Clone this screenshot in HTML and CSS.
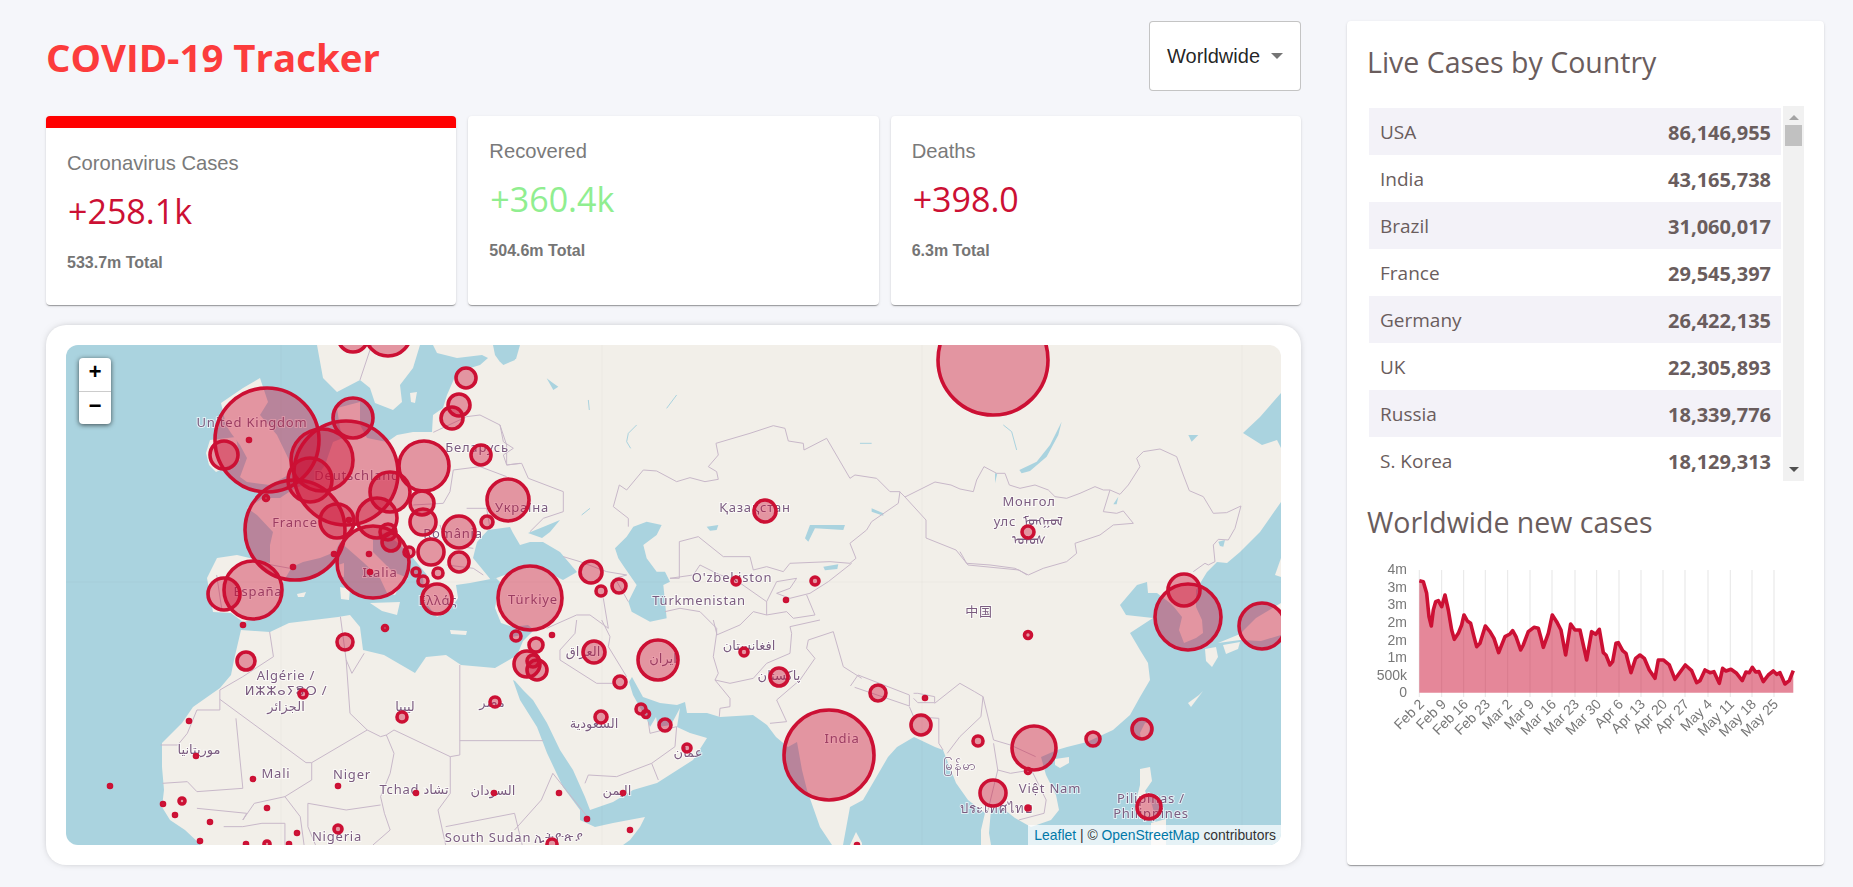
FILE: index.html
```html
<!DOCTYPE html>
<html lang="en">
<head>
    <meta charset="UTF-8">
    <title>COVID-19 Tracker</title>
    <link rel="stylesheet" href="styles.css">
</head>
<body>
<div class="app">
    <div class="app-left">
        <div class="app-header">
            <h1>COVID-19 Tracker</h1>
            <div class="country-select">
                <span>Worldwide</span>
                <i class="select-arrow"></i>
            </div>
        </div>

        <div class="app-stats">
            <div class="info-box info-box-selected">
                <p class="info-title">Coronavirus Cases</p>
                <p class="info-value">+258.1k</p>
                <p class="info-total">533.7m Total</p>
            </div>
            <div class="info-box">
                <p class="info-title">Recovered</p>
                <p class="info-value info-green">+360.4k</p>
                <p class="info-total">504.6m Total</p>
            </div>
            <div class="info-box">
                <p class="info-title">Deaths</p>
                <p class="info-value">+398.0</p>
                <p class="info-total">6.3m Total</p>
            </div>
        </div>

        <div class="map-card">
            <div class="map">
                <svg class="map-svg" viewBox="0 0 1215 500">
                    <g class="tiles">
                        <rect class="water" width="1215" height="500"/>
                        <!-- Eurasia and Africa in one outline -->
                        <path class="land" d="M367 0 L1215 0 L1215 48 L1194 72 L1177 88 L1196 100 L1211 95 L1215 103 L1215 157 L1194 187 L1174 207 L1161 218 L1151 217 L1141 227 L1130 245 L1130 262 L1136 275 L1137 288 L1130 293 L1118 298 L1113 285 L1116 272 L1108 262 L1104 258 L1091 248 L1082 248 L1081 237 L1071 240 L1054 260 L1060 270 L1087 273 L1064 288 L1074 305 L1082 318 L1084 335 L1074 352 L1064 370 L1047 385 L1021 397 L1001 402 L991 405 L975 412 L980 430 L990 450 L993 465 L985 475 L965 482 L949 473 L935 462 L925 464 L923 488 L925 500 L915 500 L915 485 L919 468 L902 455 L890 438 L877 405 L869 402 L848 392 L831 402 L822 412 L797 455 L784 462 L777 500 L766 500 L754 482 L741 445 L736 425 L731 397 L722 402 L710 392 L701 380 L687 370 L654 372 L641 368 L621 368 L619 357 L611 360 L594 358 L577 352 L566 332 L563 337 L567 350 L581 375 L584 382 L590 372 L592 382 L605 380 L614 363 L611 382 L624 388 L641 393 L627 415 L591 438 L567 445 L547 457 L524 465 L519 452 L507 425 L494 405 L481 378 L467 355 L457 345 L449 336 L447 335 L454 355 L471 382 L481 408 L497 442 L514 465 L514 475 L529 482 L547 478 L579 472 L574 482 L564 495 L557 500 L135 500 L119 485 L104 475 L96 462 L98 445 L96 422 L96 398 L116 378 L127 362 L154 343 L165 330 L168 315 L175 285 L204 287 L223 278 L272 272 L284 270 L294 282 L297 305 L318 310 L349 328 L360 312 L380 310 L395 320 L429 323 L448 312 L449 315 L457 296 L468 285 L462 280 L447 282 L435 278 L429 263 L434 237 L430 233 L404 238 L390 240 L392 253 L384 265 L371 272 L359 257 L357 233 L361 230 L347 213 L331 197 L317 188 L307 193 L307 207 L327 227 L342 233 L334 240 L329 250 L321 248 L314 233 L297 217 L281 203 L274 197 L269 207 L254 213 L237 217 L226 222 L217 237 L214 257 L197 272 L177 277 L165 268 L147 267 L141 233 L151 213 L171 210 L204 218 L204 200 L207 187 L191 170 L181 163 L197 153 L214 153 L229 143 L247 137 L259 120 L267 97 L277 93 L274 83 L271 63 L294 57 L294 80 L301 93 L321 97 L331 90 L347 87 L366 87 L367 70 L377 63 L381 50 L391 27 L414 20 L422 13 L416 10 L391 13 L371 8 Z"/>
                        <!-- islands -->
                        <path class="land" d="M251 0 L257 33 L271 47 L294 35 L304 43 L309 58 L327 65 L336 57 L334 40 L347 23 L354 0 Z"/>
                        <path class="land" d="M177 43 L194 33 L202 57 L194 70 L211 90 L224 117 L226 128 L204 140 L181 137 L174 132 L181 113 L174 100 L165 88 L160 80 L155 58 Z"/>
                        <path class="land" d="M144 95 L170 92 L174 115 L150 127 L143 120 L140 108 Z"/>
                        <path class="land" d="M274 242 L284 244 L283 255 L275 254 Z"/>
                        <path class="land" d="M272 220 L278 218 L278 232 L273 233 Z"/>
                        <path class="land" d="M304 258 L334 257 L331 270 L316 266 Z"/>
                        <path class="land" d="M384 285 L401 286 L400 290 L385 289 Z"/>
                        <path class="land" d="M231 249 L240 247 L238 252 L232 252 Z"/>
                        <path class="land" d="M344 48 L351 47 L349 58 L345 57 Z"/>
                        <path class="land" d="M446 292 L456 290 L453 296 L447 296 Z"/>
                        <path class="land" d="M784 500 L790 487 L796 498 L796 500 Z"/>
                        <path class="land" d="M989 414 L1003 412 L1003 418 L994 423 L989 420 Z"/>
                        <path class="land" d="M1139 304 L1150 302 L1152 312 L1146 322 L1140 316 Z"/>
                        <path class="land" d="M1157 300 L1174 297 L1172 304 L1160 309 Z"/>
                        <path class="land" d="M1152 298 L1174 289 L1190 273 L1215 258 L1215 290 L1195 296 L1174 295 Z"/>
                        <path class="land" d="M1209 230 L1215 213 L1215 232 Z"/>
                        <path class="land" d="M1079 378 L1085 377 L1082 391 L1075 394 L1074 388 Z"/>
                        <path class="land" d="M1074 424 L1084 422 L1086 436 L1079 446 L1086 460 L1090 474 L1072 470 L1071 452 L1074 440 Z"/>
                        <path class="land" d="M1085 478 L1100 474 L1100 500 L1085 500 Z"/>
                        <path class="land" d="M1125 362 L1122 358 L1133 350 L1137 346 Z"/>
                        <!-- inland water -->
                        <path class="water" d="M421 230 L407 213 L411 197 L422 185 L444 182 L447 188 L454 200 L464 197 L477 197 L494 207 L511 227 L497 235 L481 227 L464 222 L447 227 L425 235 Z"/>
                        <path class="water" d="M462 188 L477 182 L494 175 L484 187 L476 193 Z"/>
                        <g transform="translate(434 0) scale(.3333)">
                            <path class="water" d="M345 610 L380 575 L400 545 L440 530 L485 540 L470 570 L430 600 L440 640 L470 680 L495 680 L510 710 L490 720 L500 820 L450 830 L395 800 L385 770 L410 720 L375 670 L355 640 Z"/>
                            <path class="water" d="M915 580 L930 540 L1035 540 L1030 555 L945 550 L925 590 Z"/>
                            <path class="water" d="M970 665 L1015 658 L1012 672 L975 676 Z"/>
                            <path class="water" d="M620 545 L655 540 L650 555 L630 557 Z"/>
                            <path class="water" d="M1115 490 L1150 505 L1150 512 L1115 500 Z"/>
                            <path class="water" d="M0 10 L40 25 L45 45 L10 60 L0 50 Z"/>
                            <path class="water" d="M140 100 L160 115 L175 125 L160 135 Z"/>
                            <path class="river" d="M410 240 L385 265 L380 290 L392 310"/>
                            <path class="river" d="M530 150 L500 190"/>
                            <path class="river" d="M1115 295 L1080 295"/>
                            <path class="river" d="M270 490 L245 510"/>
                            <path class="river" d="M265 165 L268 195"/>
                        </g>
                        <g transform="translate(894 0) scale(.3333)">
                            <path class="water" d="M178 375 L230 350 L270 300 L305 230 L295 270 L260 335 L210 378 L185 385 Z"/>
                            <path class="water" d="M775 590 L795 585 L790 605 L780 603 Z"/>
                            <path class="water" d="M685 270 L715 270 L695 290 Z"/>
                            <path class="water" d="M460 478 L475 455 L470 478 Z"/>
                            <path class="water" d="M105 385 L112 385 L105 415 Z"/>
                            <path class="river" d="M130 240 L155 260 L170 315"/>
                        </g>
                        <path class="water" d="M427 0 L454 0 L450 14 L434 17 L429 10 Z"/>
                        <path class="seam" d="M215 0 V500 M536 0 V500 M856 0 V500 M1176 0 V500 M0 237 H1215"/>

                        <!-- borders, traced in the coordinates of the crops they came from -->
                        <g transform="translate(894 0) scale(.3333)">
                            <path class="border" d="M0 432 L40 440 L50 405 L72 365 L110 385 L135 385 L148 420 L180 430 L225 420 L265 435 L285 455 L320 460 L360 445 L405 425 L430 435 L450 435 L480 448 L505 420 L540 365 L530 340 L550 320 L600 312 L650 335 L670 390 L688 437 L730 455 L760 505 L800 503 L843 483 L825 550 L805 585 L775 583 L760 600 L765 650 L745 660 L735 655 L700 680"/>
                            <path class="border" d="M450 435 L430 500 L470 505 L490 498 L520 535 L460 540 L420 570 L345 595 L350 625 L320 650 L250 670 L205 690 L165 670 L90 660 L20 655 L0 620"/>
                        </g>
                        <path class="border" d="M834 147 L839 152 L869 137 L885 140 L894 144"/>
                        <path class="border" d="M839 152 L860 175 L860 193 L890 205 L902 220 L953 225 L961 230"/>
                        <g transform="translate(434 0) scale(.3333)">
                            <path class="border" d="M385 545 L385 520 L340 485 L358 420 L380 435 L430 375 L470 378 L530 410 L570 398 L615 410 L655 403 L650 380 L625 365 L655 330 L648 295 L750 265 L820 242 L855 250 L865 288 L910 295 L912 315 L980 280 L1050 400 L1065 390 L1130 400 L1170 440 L1200 440"/>
                            <path class="border" d="M1200 440 L1195 475 L1115 530 L1100 555 L1050 595 L1068 640 L1050 655 L990 650 L870 655 L850 680 L800 665 L760 675 L750 635 L670 635 L595 575 L538 590 L538 700 L510 700"/>
                            <path class="border" d="M510 700 L580 690 L600 660 L660 690 L700 700 L800 770 L830 710 L890 700 L870 730 L830 745 L870 760 L930 745 L985 710 L1055 655"/>
                            <path class="border" d="M495 800 L540 790 L600 800 L650 850 L650 870 L720 840 L760 800 L800 810 L800 770"/>
                            <path class="border" d="M800 810 L860 800 L880 820 L945 810 L920 750"/>
                            <path class="border" d="M0 240 L10 290 L40 310 L10 330 L20 360 L65 355 L85 400 L190 440 L190 500 L130 520 L90 560"/>
                            <path class="border" d="M190 635 L240 650 L320 680 L380 690 L345 700 L385 770"/>
                            <path class="border" d="M310 760 L325 850 L270 810 L230 810 L140 850"/>
                        </g>
                        <g transform="translate(434 275) scale(.3333)">
                            <path class="border" d="M640 0 L650 40 L640 110 L655 160 L645 180 L690 235 L690 260 L660 265 L658 290"/>
                            <path class="border" d="M645 180 L690 190 L760 175 L800 130 L870 100 L875 40 L870 20 L960 0"/>
                            <path class="border" d="M1000 35 L925 60 L920 85 L945 115 L900 180 L830 240 L860 305 L810 310"/>
                            <path class="border" d="M1000 35 L1030 140 L1085 175"/>
                            <path class="border" d="M230 0 L225 40 L180 90 L180 120 L290 190 L340 190"/>
                            <path class="border" d="M305 0 L330 50 L325 80 L380 170"/>
                            <path class="border" d="M255 490 L265 465 L350 470 L455 430 L475 480"/>
                            <path class="border" d="M455 430 L525 380 L530 320 L450 340 L445 305"/>
                        </g>
                        <g transform="translate(574 255) scale(.4209 .3333)">
                            <path class="border" d="M500 258 L518 225 L640 285 L640 318 L510 262"/>
                            <path class="border" d="M650 280 L660 280 L700 290 L700 308 L660 308 L650 295"/>
                            <path class="border" d="M640 320 L650 350 L710 355 L710 430 L720 450"/>
                            <path class="border" d="M700 310 L760 250 L795 275 L815 290 L810 350 L760 410 L730 460"/>
                            <path class="border" d="M815 290 L840 420 L880 435 L940 470"/>
                            <path class="border" d="M840 430 L850 510 L880 520 L930 510 L965 600 L960 640 L900 660"/>
                            <path class="border" d="M850 510 L825 640"/>
                        </g>
                        <g transform="translate(-26 255) scale(.3827 .3333)">
                            <path class="border" d="M600 95 L610 170 L530 230 L470 270 L470 330 L410 330 L385 400 L360 435 L315 435"/>
                            <path class="border" d="M470 298 L695 488 L710 488 L855 390 L890 410 L905 405 L925 390 L1072 470"/>
                            <path class="border" d="M785 50 L800 180 L815 220 L847 160"/>
                            <path class="border" d="M800 180 L810 340 L855 390"/>
                            <path class="border" d="M905 405 L925 460 L915 520 L890 590 L900 640 L915 690 L870 735"/>
                            <path class="border" d="M512 355 L530 565 L410 575 L385 545 L320 550"/>
                            <path class="border" d="M1097 195 L1097 465 L1072 470 L1072 580 L1040 630 L1060 735"/>
                            <path class="border" d="M1097 422 L1315 422"/>
                            <path class="border" d="M710 488 L710 540 L640 590 L680 650"/>
                            <path class="border" d="M700 610 L800 630 L890 615"/>
                            <path class="border" d="M1060 680 L1240 640 L1260 735"/>
                            <path class="border" d="M1240 690 L1310 600 L1340 520"/>
                            <path class="border" d="M1340 520 L1430 650"/>
                            <path class="border" d="M530 660 L560 610 L640 590"/>
                            <path class="border" d="M410 625 L540 640 L530 660"/>
                            <path class="border" d="M480 680 L530 680 L580 670 L640 670 L640 735"/>
                            <path class="border" d="M680 650 L690 735"/>
                            <path class="border" d="M700 610 L700 680 L720 735"/>
                        </g>
                        <g transform="translate(114 0) scale(.3333)">
                            <path class="border" d="M575 0 L540 105"/>
                            <path class="border" d="M760 262 L860 215 L900 210 L960 240 L980 300 L980 360 L1020 355"/>
                            <path class="border" d="M820 375 L900 365 L980 395"/>
                            <path class="border" d="M820 375 L810 440 L790 475 L700 480"/>
                            <path class="border" d="M860 490 L920 490 L930 550"/>
                            <path class="border" d="M780 540 L800 600 L880 610"/>
                            <path class="border" d="M800 660 L880 670 L910 690"/>
                            <path class="border" d="M220 650 L330 670"/>
                            <path class="border" d="M110 690 L125 790"/>
                        </g>

                        <!-- place names -->
                        <text class="place" x="186" y="82">United Kingdom</text>
                        <text class="place" x="291" y="135">Deutschland</text>
                        <text class="place" x="229" y="182">France</text>
                        <text class="place" x="192" y="251">España</text>
                        <text class="place" x="314" y="232">Italia</text>
                        <text class="place" x="411" y="107">Беларусь</text>
                        <text class="place" x="456" y="167">Україна</text>
                        <text class="place" x="387" y="193">România</text>
                        <text class="place" x="372" y="260">Ελλάς</text>
                        <text class="place" x="467" y="259">Türkiye</text>
                        <text class="place" x="689" y="167">Қазақстан</text>
                        <text class="place" x="666" y="237">O'zbekiston</text>
                        <text class="place" x="633" y="260">Türkmenistan</text>
                        <text class="place" x="963" y="161">Монгол</text>
                        <text class="place" x="939" y="181">улс</text>
                        <text class="place" x="977" y="181">ᠮᠣᠩᠭᠣᠯ</text>
                        <text class="place" x="963" y="200">ᠤᠯᠤᠰ</text>
                        <text class="place" x="913" y="271">中国</text>
                        <text class="place" x="517" y="311">العراق</text>
                        <text class="place" x="597" y="318">ایران</text>
                        <text class="place" x="683" y="305">افغانستان</text>
                        <text class="place" x="713" y="335">پاکستان</text>
                        <text class="place" x="528" y="383">السعودية</text>
                        <text class="place" x="622" y="412">عمان</text>
                        <text class="place" x="551" y="450">اليمن</text>
                        <text class="place" x="776" y="398">India</text>
                        <text class="place" x="339" y="366">ليبيا</text>
                        <text class="place" x="426" y="362">مصر</text>
                        <text class="place" x="220" y="335">Algérie /</text>
                        <text class="place" x="220" y="350">ⵍⵣⵣⴰⵢⴻⵔ /</text>
                        <text class="place" x="220" y="366">الجزائر</text>
                        <text class="place" x="133" y="409">موريتانيا</text>
                        <text class="place" x="210" y="433">Mali</text>
                        <text class="place" x="286" y="434">Niger</text>
                        <text class="place" x="348" y="449">Tchad تشاد</text>
                        <text class="place" x="427" y="450">السودان</text>
                        <text class="place" x="271" y="496">Nigeria</text>
                        <text class="place" x="422" y="497">South Sudan</text>
                        <text class="place" x="493" y="496">ኢትዮጵያ</text>
                        <text class="place" x="894" y="425">မြန်မာ</text>
                        <text class="place" x="931" y="468">ประเทศไทย</text>
                        <text class="place" x="984" y="448">Việt Nam</text>
                        <text class="place" x="1085" y="458">Pilipinas /</text>
                        <text class="place" x="1085" y="473">Philippines</text>
                    </g>

                    <!-- cases -->
                    <g class="cases">
                        <circle cx="201" cy="95" r="52"/><circle cx="158" cy="110" r="14"/><circle cx="229" cy="185" r="50"/>
                        <circle cx="187" cy="245" r="29"/><circle cx="158" cy="249" r="16"/><circle cx="280" cy="128" r="52"/>
                        <circle cx="256" cy="115" r="31"/><circle cx="244" cy="135" r="22"/><circle cx="287" cy="73" r="20"/>
                        <circle cx="358" cy="121" r="25"/><circle cx="324" cy="147" r="20"/><circle cx="311" cy="173" r="20"/>
                        <circle cx="271" cy="176" r="17"/><circle cx="307" cy="217" r="36"/><circle cx="356" cy="158" r="12"/>
                        <circle cx="357" cy="177" r="13"/><circle cx="393" cy="187" r="16"/><circle cx="365" cy="207" r="13"/>
                        <circle cx="393" cy="217" r="10"/><circle cx="322" cy="187" r="8"/><circle cx="325" cy="197" r="9"/>
                        <circle cx="343" cy="207" r="5"/><circle cx="350" cy="227" r="4"/><circle cx="357" cy="236" r="5"/>
                        <circle cx="372" cy="228" r="5"/><circle cx="371" cy="254" r="15"/><circle cx="421" cy="177" r="6"/>
                        <circle cx="442" cy="155" r="21"/><circle cx="415" cy="110" r="10"/><circle cx="386" cy="73" r="11"/>
                        <circle cx="393" cy="60" r="11"/><circle cx="400" cy="33" r="10"/><circle cx="287" cy="-8" r="15"/>
                        <circle cx="322" cy="-12" r="23"/><circle cx="183" cy="95" r="1.5"/><circle cx="200" cy="153" r="2.5"/>
                        <circle cx="227" cy="222" r="1.5"/><circle cx="268" cy="209" r="1.5"/><circle cx="283" cy="175" r="1.5"/>
                        <circle cx="303" cy="209" r="1.5"/><circle cx="304" cy="227" r="1.5"/><circle cx="177" cy="280" r="1.5"/>
                        <circle cx="319" cy="283" r="2.5"/><circle cx="279" cy="297" r="8"/><circle cx="464" cy="253" r="32"/>
                        <circle cx="525" cy="227" r="11"/><circle cx="535" cy="246" r="5"/><circle cx="553" cy="241" r="7"/>
                        <circle cx="699" cy="166" r="11"/><circle cx="670" cy="236" r="4"/><circle cx="749" cy="236" r="4"/>
                        <circle cx="720" cy="255" r="1.5"/><circle cx="450" cy="291" r="5"/><circle cx="486" cy="290" r="1.5"/>
                        <circle cx="470" cy="300" r="7"/><circle cx="461" cy="319" r="13"/><circle cx="471" cy="325" r="10"/>
                        <circle cx="467" cy="316" r="6"/><circle cx="528" cy="307" r="11"/><circle cx="592" cy="315" r="20"/>
                        <circle cx="554" cy="337" r="6"/><circle cx="535" cy="372" r="6"/><circle cx="575" cy="364" r="5"/>
                        <circle cx="580" cy="369" r="3.5"/><circle cx="599" cy="380" r="6"/><circle cx="621" cy="403" r="4"/>
                        <circle cx="678" cy="307" r="4"/><circle cx="713" cy="332" r="9"/><circle cx="763" cy="410" r="45"/>
                        <circle cx="812" cy="348" r="8"/><circle cx="557" cy="448" r="1.5"/><circle cx="493" cy="448" r="1.5"/>
                        <circle cx="521" cy="474" r="1.5"/><circle cx="564" cy="485" r="1.5"/><circle cx="486" cy="499" r="5"/>
                        <circle cx="855" cy="380" r="10"/><circle cx="859" cy="353" r="1.5"/><circle cx="912" cy="396" r="5"/>
                        <circle cx="927" cy="448" r="13"/><circle cx="968" cy="403" r="22"/><circle cx="962" cy="426" r="2.5"/>
                        <circle cx="962" cy="463" r="2"/><circle cx="1027" cy="394" r="7"/><circle cx="1076" cy="384" r="10"/>
                        <circle cx="1083" cy="462" r="12"/><circle cx="1122" cy="272" r="33"/><circle cx="1118" cy="245" r="16"/>
                        <circle cx="1196" cy="281" r="23"/><circle cx="962" cy="290" r="3.5"/><circle cx="962" cy="187" r="6"/>
                        <circle cx="927" cy="15" r="55"/><circle cx="180" cy="316" r="9"/><circle cx="237" cy="349" r="4"/>
                        <circle cx="336" cy="372" r="5"/><circle cx="429" cy="357" r="5"/><circle cx="123" cy="376" r="1.5"/>
                        <circle cx="130" cy="411" r="1.5"/><circle cx="44" cy="441" r="1.5"/><circle cx="187" cy="434" r="1.5"/>
                        <circle cx="272" cy="441" r="1.5"/><circle cx="350" cy="448" r="1.5"/><circle cx="428" cy="448" r="1.5"/>
                        <circle cx="97" cy="459" r="1.5"/><circle cx="116" cy="456" r="3"/><circle cx="109" cy="470" r="1.5"/>
                        <circle cx="144" cy="477" r="1.5"/><circle cx="201" cy="463" r="1.5"/><circle cx="134" cy="496" r="1.5"/>
                        <circle cx="231" cy="488" r="1.5"/><circle cx="272" cy="484" r="4"/><circle cx="201" cy="499" r="3"/>
                        <circle cx="180" cy="499" r="1.5"/><circle cx="223" cy="499" r="1.5"/><circle cx="791" cy="500" r="1.5"/>
                    </g>
                </svg>

                <div class="zoom-control">
                    <span class="zoom-btn">+</span>
                    <span class="zoom-btn">−</span>
                </div>
                <div class="attribution"><a>Leaflet</a> | © <a>OpenStreetMap</a> contributors</div>
            </div>
        </div>
    </div>

    <div class="app-right">
        <h3>Live Cases by Country</h3>
        <div class="table-box">
            <div class="table-rows">
                <div class="table-row"><span>USA</span><strong>86,146,955</strong></div>
                <div class="table-row"><span>India</span><strong>43,165,738</strong></div>
                <div class="table-row"><span>Brazil</span><strong>31,060,017</strong></div>
                <div class="table-row"><span>France</span><strong>29,545,397</strong></div>
                <div class="table-row"><span>Germany</span><strong>26,422,135</strong></div>
                <div class="table-row"><span>UK</span><strong>22,305,893</strong></div>
                <div class="table-row"><span>Russia</span><strong>18,339,776</strong></div>
                <div class="table-row"><span>S. Korea</span><strong>18,129,313</strong></div>
            </div>
            <div class="scrollbar">
                <i class="scroll-up"></i>
                <b class="scroll-thumb"></b>
                <i class="scroll-down"></i>
            </div>
        </div>

        <h3 class="chart-title">Worldwide new cases</h3>
        <svg class="chart" viewBox="0 0 435 195">
            <path class="chart-grid" d="M50.3 15V142 M72.7 15V142 M94.7 15V142 M116.3 15V142 M138.7 15V142 M161 15V142 M183 15V142 M206 15V142 M227.7 15V142 M250 15V142 M272 15V142 M294 15V142 M316 15V142 M339 15V142 M361.3 15V142 M383 15V142 M405 15V142"/>
            <g transform="translate(-39 -65) scale(.3333)">
                <path class="chart-area" d="M268 272 L280 275 L290 310 L297 380 L304 408 L310 360 L317 335 L325 332 L335 350 L345 315 L355 360 L365 420 L373 448 L385 430 L395 405 L402 375 L412 393 L422 400 L432 440 L440 470 L450 460 L466 408 L480 425 L492 445 L506 488 L525 440 L540 432 L548 422 L558 440 L572 480 L580 465 L595 425 L612 412 L625 415 L632 440 L640 472 L655 430 L667 375 L680 395 L693 420 L707 495 L722 402 L735 420 L750 420 L770 510 L785 425 L797 433 L808 418 L820 488 L828 495 L840 525 L848 515 L858 460 L865 458 L878 482 L888 490 L903 548 L917 505 L930 495 L943 505 L958 540 L975 565 L985 510 L1000 510 L1018 525 L1035 568 L1048 550 L1066 525 L1085 542 L1100 578 L1110 572 L1125 540 L1140 548 L1152 545 L1168 580 L1178 535 L1188 543 L1203 538 L1220 550 L1237 572 L1248 546 L1258 548 L1267 532 L1277 546 L1287 545 L1300 575 L1315 555 L1330 543 L1340 553 L1350 548 L1365 582 L1378 572 L1390 542 L1390 608 L268 608 Z"/>
                <path class="chart-line" d="M268 272 L280 275 L290 310 L297 380 L304 408 L310 360 L317 335 L325 332 L335 350 L345 315 L355 360 L365 420 L373 448 L385 430 L395 405 L402 375 L412 393 L422 400 L432 440 L440 470 L450 460 L466 408 L480 425 L492 445 L506 488 L525 440 L540 432 L548 422 L558 440 L572 480 L580 465 L595 425 L612 412 L625 415 L632 440 L640 472 L655 430 L667 375 L680 395 L693 420 L707 495 L722 402 L735 420 L750 420 L770 510 L785 425 L797 433 L808 418 L820 488 L828 495 L840 525 L848 515 L858 460 L865 458 L878 482 L888 490 L903 548 L917 505 L930 495 L943 505 L958 540 L975 565 L985 510 L1000 510 L1018 525 L1035 568 L1048 550 L1066 525 L1085 542 L1100 578 L1110 572 L1125 540 L1140 548 L1152 545 L1168 580 L1178 535 L1188 543 L1203 538 L1220 550 L1237 572 L1248 546 L1258 548 L1267 532 L1277 546 L1287 545 L1300 575 L1315 555 L1330 543 L1340 553 L1350 548 L1365 582 L1378 572 L1390 542"/>
            </g>
            <g class="chart-y">
                <text x="38" y="19">4m</text>
                <text x="38" y="37">3m</text>
                <text x="38" y="54">3m</text>
                <text x="38" y="72">2m</text>
                <text x="38" y="90">2m</text>
                <text x="38" y="107">1m</text>
                <text x="38" y="125">500k</text>
                <text x="38" y="142">0</text>
            </g>
            <g class="chart-x">
                <text transform="translate(56 150) rotate(-45)">Feb 2</text>
                <text transform="translate(78 150) rotate(-45)">Feb 9</text>
                <text transform="translate(100 150) rotate(-45)">Feb 16</text>
                <text transform="translate(122 150) rotate(-45)">Feb 23</text>
                <text transform="translate(144 150) rotate(-45)">Mar 2</text>
                <text transform="translate(166 150) rotate(-45)">Mar 9</text>
                <text transform="translate(188 150) rotate(-45)">Mar 16</text>
                <text transform="translate(211 150) rotate(-45)">Mar 23</text>
                <text transform="translate(233 150) rotate(-45)">Mar 30</text>
                <text transform="translate(255 150) rotate(-45)">Apr 6</text>
                <text transform="translate(277 150) rotate(-45)">Apr 13</text>
                <text transform="translate(299 150) rotate(-45)">Apr 20</text>
                <text transform="translate(321 150) rotate(-45)">Apr 27</text>
                <text transform="translate(344 150) rotate(-45)">May 4</text>
                <text transform="translate(366 150) rotate(-45)">May 11</text>
                <text transform="translate(388 150) rotate(-45)">May 18</text>
                <text transform="translate(410 150) rotate(-45)">May 25</text>
            </g>
        </svg>
    </div>
</div>
</body>
</html>
```

FILE: styles.css
```css
* {
    box-sizing: border-box;
}
body {
    margin: 0;
    background-color: #f5f6fa;
    font-family: "Liberation Sans", Arial, sans-serif;
}
.app {
    display: flex;
    gap: 46px;
    padding: 21px 0 22px 46px;
}
.app-left {
    width: 1255px;
}
.app-header {
    display: flex;
    justify-content: space-between;
    align-items: center;
    height: 70px;
    margin-bottom: 25px;
}
.app-header h1 {
    margin: 2px 0 0;
    color: #fc3c3c;
    font-family: "Open Sans", sans-serif;
    font-size: 38.4px;
    font-weight: 700;
}
.country-select {
    display: flex;
    align-items: center;
    justify-content: space-between;
    width: 152px;
    height: 70px;
    padding: 0 17px;
    background: #fff;
    border: 1px solid rgba(0, 0, 0, 0.23);
    border-radius: 4px;
    color: rgba(0, 0, 0, 0.87);
    font-size: 20px;
}
.select-arrow {
    width: 0;
    height: 0;
    border-left: 6px solid transparent;
    border-right: 6px solid transparent;
    border-top: 6px solid rgba(0, 0, 0, 0.54);
}

.app-stats {
    display: flex;
    gap: 12px;
    height: 189px;
    margin-bottom: 20px;
}
.info-box {
    flex: 1;
    padding: 21px;
    background: #fff;
    border-radius: 4px;
    box-shadow: 0 2px 1px -1px rgba(0, 0, 0, 0.2), 0 1px 1px 0 rgba(0, 0, 0, 0.14), 0 1px 3px 0 rgba(0, 0, 0, 0.12);
}
.info-box-selected {
    border-top: 12px solid #f00;
}
.info-box p {
    margin: 0;
}
.info-title {
    color: #7a7a7a;
    font-size: 20.2px;
    line-height: 28px;
}
.info-box .info-value {
    margin-top: 12px;
    padding-left: 1px;
    color: #cc1034;
    font-family: "Open Sans", sans-serif;
    font-size: 34px;
    font-weight: 500;
    line-height: 44px;
}
.info-box .info-green {
    color: #90ee90;
}
.info-box .info-total {
    margin-top: 19px;
    color: #757575;
    font-size: 16px;
    font-weight: bold;
    line-height: 22px;
}

.map-card {
    height: 540px;
    padding: 20px;
    background: #fff;
    border-radius: 20px;
    box-shadow: 0 0 8px -4px rgba(0, 0, 0, 0.5);
}
.map {
    position: relative;
    height: 500px;
    overflow: hidden;
    border-radius: 12px;
}
.map-svg {
    display: block;
    width: 100%;
    height: 100%;
}
.tiles {
    filter: blur(0.5px);
}
.water {
    fill: #aad3df;
}
.land {
    fill: #f2efe9;
}
.river {
    fill: none;
    stroke: #aad3df;
    stroke-width: 1;
    vector-effect: non-scaling-stroke;
}
.seam {
    fill: none;
    stroke: rgba(120, 120, 120, 0.04);
    stroke-width: 1;
}
.border {
    fill: none;
    stroke: #c8b8c9;
    stroke-width: 1;
    vector-effect: non-scaling-stroke;
}
.place {
    fill: #7b5c80;
    font-family: "Noto Sans", "DejaVu Sans", "Noto Sans CJK SC", sans-serif;
    font-size: 13px;
    letter-spacing: 0.8px;
    text-anchor: middle;
    paint-order: stroke;
    stroke: rgba(255, 255, 255, 0.65);
    stroke-width: 2px;
}
.cases circle {
    fill: #cc1034;
    fill-opacity: 0.4;
    stroke: #cc1034;
    stroke-width: 3.6;
}
.zoom-control {
    position: absolute;
    top: 13px;
    left: 13px;
    width: 32px;
    border-radius: 4px;
    background: #fff;
    box-shadow: 0 1px 5px rgba(0, 0, 0, 0.65);
}
.zoom-btn {
    display: block;
    height: 33px;
    color: #000;
    font-family: "Liberation Mono", monospace;
    font-size: 22px;
    font-weight: bold;
    line-height: 32px;
    text-align: center;
}
.zoom-btn + .zoom-btn {
    border-top: 1px solid #ccc;
}
.attribution {
    position: absolute;
    right: 0;
    bottom: 0;
    height: 20px;
    padding: 0 5px 0 6px;
    background: rgba(255, 255, 255, 0.7);
    color: #333;
    font-size: 13.9px;
    line-height: 20px;
}
.attribution a {
    color: #0078a8;
}

.app-right {
    width: 477px;
    height: 844px;
    padding: 22px 20px 0 22px;
    background: #fff;
    border-radius: 4px;
    box-shadow: 0 2px 1px -1px rgba(0, 0, 0, 0.2), 0 1px 1px 0 rgba(0, 0, 0, 0.14), 0 1px 3px 0 rgba(0, 0, 0, 0.12);
}
.app-right h3 {
    margin: 0 0 25px -2px;
    color: #6a5d5d;
    font-family: "Open Sans", sans-serif;
    font-size: 28.5px;
    font-weight: 400;
    line-height: 38px;
}
.app-right .chart-title {
    margin: 22px 0 14px -2px;
}
.table-box {
    display: flex;
    justify-content: space-between;
    height: 375px;
}
.table-rows {
    width: 412px;
    padding-top: 2px;
    overflow: hidden;
}
.table-row {
    display: flex;
    justify-content: space-between;
    align-items: center;
    height: 47px;
    padding: 1px 10px 0 11px;
    color: #6a5d5d;
    font-family: "Open Sans", sans-serif;
    font-size: 19px;
}
.table-row strong {
    font-size: 20px;
}
.table-row:nth-child(odd) {
    background: #f3f2f8;
}
.scrollbar {
    display: flex;
    flex-direction: column;
    align-items: center;
    width: 21px;
    background: #f1f1f1;
}
.scroll-thumb {
    width: 17px;
    height: 21px;
    margin-top: 5px;
    background: #c1c1c1;
}
.scroll-up,
.scroll-down {
    width: 0;
    height: 0;
    border-left: 5px solid transparent;
    border-right: 5px solid transparent;
}
.scroll-up {
    margin-top: 9px;
    border-bottom: 5px solid #a3a3a3;
}
.scroll-down {
    margin-top: auto;
    margin-bottom: 9px;
    border-top: 5px solid #505050;
}
.chart {
    display: block;
    width: 435px;
    height: 195px;
    filter: blur(0.3px);
}
.chart-grid {
    fill: none;
    stroke: rgba(0, 0, 0, 0.1);
    stroke-width: 1;
}
.chart-area {
    fill: rgba(204, 16, 52, 0.5);
}
.chart-line {
    fill: none;
    stroke: #cc1034;
    stroke-width: 3.6;
    stroke-linejoin: round;
    vector-effect: non-scaling-stroke;
}
.chart-y text,
.chart-x text {
    fill: #777;
    font-size: 14px;
    text-anchor: end;
}
```
